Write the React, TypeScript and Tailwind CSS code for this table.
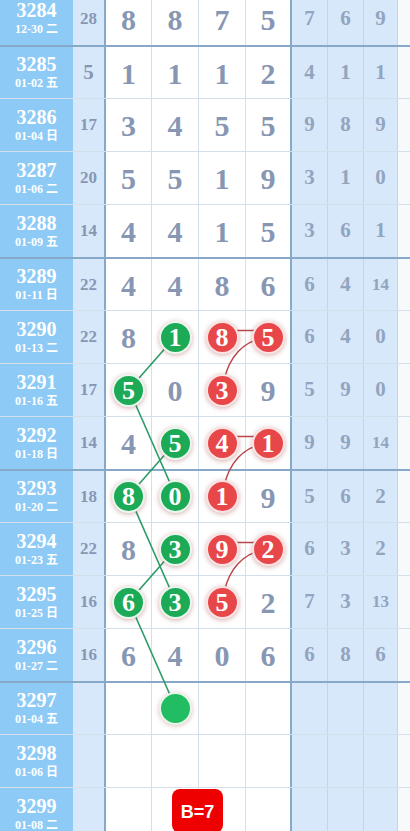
import React from "react";

type Mark = "g" | "r" | null;

type Row = {
  no: string;
  date: string;
  sum?: string;
  nums: string[];
  marks: Mark[];
  tail: string[];
};

const rows: Row[] = [
  { no: "3284", date: "12-30 二", sum: "28", nums: ["8", "8", "7", "5"], marks: [null, null, null, null], tail: ["7", "6", "9"] },
  { no: "3285", date: "01-02 五", sum: "5", nums: ["1", "1", "1", "2"], marks: [null, null, null, null], tail: ["4", "1", "1"] },
  { no: "3286", date: "01-04 日", sum: "17", nums: ["3", "4", "5", "5"], marks: [null, null, null, null], tail: ["9", "8", "9"] },
  { no: "3287", date: "01-06 二", sum: "20", nums: ["5", "5", "1", "9"], marks: [null, null, null, null], tail: ["3", "1", "0"] },
  { no: "3288", date: "01-09 五", sum: "14", nums: ["4", "4", "1", "5"], marks: [null, null, null, null], tail: ["3", "6", "1"] },
  { no: "3289", date: "01-11 日", sum: "22", nums: ["4", "4", "8", "6"], marks: [null, null, null, null], tail: ["6", "4", "14"] },
  { no: "3290", date: "01-13 二", sum: "22", nums: ["8", "1", "8", "5"], marks: [null, "g", "r", "r"], tail: ["6", "4", "0"] },
  { no: "3291", date: "01-16 五", sum: "17", nums: ["5", "0", "3", "9"], marks: ["g", null, "r", null], tail: ["5", "9", "0"] },
  { no: "3292", date: "01-18 日", sum: "14", nums: ["4", "5", "4", "1"], marks: [null, "g", "r", "r"], tail: ["9", "9", "14"] },
  { no: "3293", date: "01-20 二", sum: "18", nums: ["8", "0", "1", "9"], marks: ["g", "g", "r", null], tail: ["5", "6", "2"] },
  { no: "3294", date: "01-23 五", sum: "22", nums: ["8", "3", "9", "2"], marks: [null, "g", "r", "r"], tail: ["6", "3", "2"] },
  { no: "3295", date: "01-25 日", sum: "16", nums: ["6", "3", "5", "2"], marks: ["g", "g", "r", null], tail: ["7", "3", "13"] },
  { no: "3296", date: "01-27 二", sum: "16", nums: ["6", "4", "0", "6"], marks: [null, null, null, null], tail: ["6", "8", "6"] },
  { no: "3297", date: "01-04 五", nums: ["", "", "", ""], marks: [null, null, null, null], tail: ["", "", ""] },
  { no: "3298", date: "01-06 日", nums: ["", "", "", ""], marks: [null, null, null, null], tail: ["", "", ""] },
  { no: "3299", date: "01-08 二", nums: ["", "", "", ""], marks: [null, null, null, null], tail: ["", "", ""] },
];

const ROW_H = 53;
const colX = [129, 175.5, 222.5, 269];
const cy = (i: number) => i * ROW_H + 26.5;

// green zigzag links: [row, col] -> [row, col]
const greenLinks: [number, number, number, number][] = [
  [6, 1, 7, 0],
  [7, 0, 9, 1],
  [8, 1, 9, 0],
  [9, 0, 11, 1],
  [10, 1, 11, 0],
  [11, 0, 13, 1],
];

// red pairs on the same row, then a bend down to the next row
const redRows = [6, 8, 10];

const mainW = ["w-[46px]", "w-[47px]", "w-[47px]", "w-[46px]"];
const tailW = ["w-[36px]", "w-[36px]", "w-[34px]"];

const serif = { fontFamily: '"Liberation Serif", "Times New Roman", serif' };

const Ball = ({ value, color }: { value: string; color: "g" | "r" }) => (
  <div
    className={`relative z-10 flex h-[33px] w-[33px] items-center justify-center rounded-full border-2 text-[26px] font-bold leading-none text-white shadow-[0_1px_5px_rgba(160,70,70,0.45)] ${
      color === "g" ? "border-[#e9f7ee] bg-[#1caa57]" : "border-[#fbe3e3] bg-[#e8474a]"
    }`}
    style={serif}
  >
    <span className="pt-[1px]">{value}</span>
  </div>
);

export default function App() {
  return (
    <div className="relative h-[831px] w-[410px] overflow-hidden bg-white">
      <div className="relative -mt-[8px]">
        {rows.map((r, i) => {
          const heavy = i % 4 === 1;
          return (
            <div
              key={r.no}
              className={`relative flex h-[53px] ${heavy ? "border-t-2 border-[#86a9c9]" : i > 0 ? "border-t border-[#d3dfea]" : ""}`}
            >
              <div className="flex w-[73px] flex-col items-center justify-center bg-[#8dcaf6] text-white" style={serif}>
                <div className="text-[20px] font-bold leading-[21px]">{r.no}</div>
                <div
                  className="mt-[1px] text-[12px] font-bold leading-[15px]"
                  style={{ fontFamily: '"Liberation Serif", "Noto Sans CJK SC", serif' }}
                >
                  {r.date}
                </div>
              </div>
              <div
                className={`flex w-[33px] items-center justify-center border-r-2 border-[#86a9c9] bg-[#d7e8fb] font-bold text-[#8797b3] ${
                  (r.sum ?? "").length > 1 ? "text-[17px]" : "text-[21px]"
                }`}
                style={serif}
              >
                {r.sum}
              </div>
              {r.nums.map((n, c) => (
                <div
                  key={c}
                  className={`flex ${mainW[c]} items-center justify-center ${c < 3 ? "border-r border-[#d3dfea]" : "border-r-2 border-[#86a9c9]"}`}
                >
                  {r.marks[c] ? (
                    <Ball value={n} color={r.marks[c] as "g" | "r"} />
                  ) : i === 13 && c === 1 ? (
                    <div className="relative z-10 h-[33px] w-[33px] rounded-full border-2 border-[#e6f6ea] bg-[#22bd63] shadow-[0_1px_5px_rgba(160,70,70,0.35)]" />
                  ) : (
                    <span className="pt-[2px] text-[30px] font-bold leading-none text-[#8797b3]" style={serif}>
                      {n}
                    </span>
                  )}
                </div>
              ))}
              {r.tail.map((t, c) => (
                <div
                  key={c}
                  className={`flex ${tailW[c]} items-center justify-center border-r border-[#c2d6ea] bg-[#d7e8fb] font-bold text-[#93a4be] ${
                    t.length > 1 ? "text-[17px]" : "text-[21px]"
                  }`}
                  style={serif}
                >
                  {t}
                </div>
              ))}
              <div className="flex-1 bg-[#f7f9fb]" />
              {i === 15 && (
                <div
                  className="absolute left-[172px] top-[1px] z-20 flex h-[44px] w-[51px] items-start justify-center rounded-[8px] bg-[#ee0000] pt-[10px] text-[18px] font-bold text-white"
                  style={{ fontFamily: '"Liberation Sans", Arial, sans-serif' }}
                >
                  B=7
                </div>
              )}
            </div>
          );
        })}

        <svg className="pointer-events-none absolute left-0 top-0 z-0" width={410} height={860}>
          {greenLinks.map(([r1, c1, r2, c2], k) => (
            <line key={k} x1={colX[c1]} y1={cy(r1)} x2={colX[c2]} y2={cy(r2)} stroke="#2a9a66" strokeWidth={1.6} />
          ))}
          {redRows.map(r => (
            <g key={r} stroke="#b9474b" strokeWidth={1.5} fill="none">
              <line x1={colX[2]} y1={cy(r) - 6} x2={colX[3]} y2={cy(r) - 6} />
              <path d={`M ${colX[3]} ${cy(r)} Q ${colX[2] + 6} ${cy(r) + 6} ${colX[2]} ${cy(r + 1)}`} />
            </g>
          ))}
        </svg>
      </div>
    </div>
  );
}
